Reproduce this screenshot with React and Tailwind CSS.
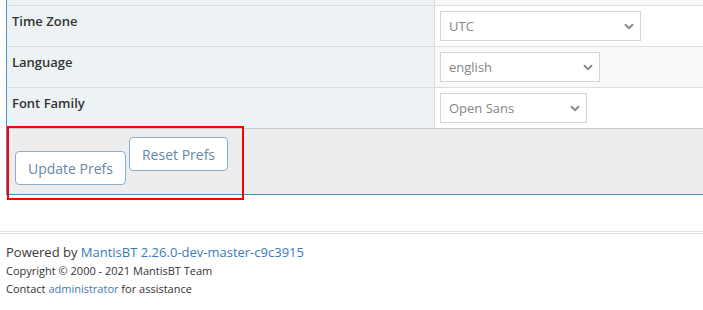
import React from "react";

function Chevron() {
  return (
    <svg width="10" height="7" viewBox="0 0 10 7" className="shrink-0">
      <path d="M1 1.2 L5 5.2 L9 1.2" fill="none" stroke="#888" strokeWidth="2" />
    </svg>
  );
}

function FakeSelect({ value, width }) {
  return (
    <div
      className="flex h-[30px] items-center justify-between border border-[#d5d5d5] bg-white pl-[8px] pr-[6px] pt-[1px] text-[13px] text-[#858585]"
      style={{ width }}
    >
      <span>{value}</span>
      <Chevron />
    </div>
  );
}

function Row({ label, value, width, striped }) {
  return (
    <div className="flex h-[41px] border-t border-[#dddddd]">
      <div className="w-[427px] shrink-0 bg-[#edf3f4] pl-[5px] pt-[5px] text-[13px] font-semibold leading-[20px] text-[#333]">
        {label}
      </div>
      <div
        className={
          "flex-1 border-l border-[#dddddd] pl-[5px] pt-[5px] " +
          (striped ? "bg-[#f9f9f9]" : "bg-white")
        }
      >
        <FakeSelect value={value} width={width} />
      </div>
    </div>
  );
}

export default function App() {
  return (
    <div
      className="relative h-[310px] w-[703px] overflow-hidden bg-white"
      style={{ fontFamily: "'Open Sans', 'Liberation Sans', sans-serif" }}
    >
      <div className="ml-[6px] w-[720px] border-b border-l border-[#5090c1]">
        <div className="flex h-[5px]">
          <div className="w-[427px] shrink-0 bg-[#edf3f4]" />
          <div className="flex-1 border-l border-[#dddddd] bg-[#f9f9f9]" />
        </div>
        <Row label="Time Zone" value="UTC" width={201} />
        <Row label="Language" value="english" width={160} striped />
        <Row label="Font Family" value="Open Sans" width={147} />
        <div className="flex h-[66px] items-start gap-[3px] border-t border-[#cccccc] bg-[#ededed] pl-[8px] pt-[8px]">
          <button className="mt-[14px] h-[34px] w-[111px] rounded-[4px] border border-[#8aafce] bg-white text-[14px] text-[#6688a6]">
            Update Prefs
          </button>
          <button className="h-[34px] w-[99px] rounded-[4px] border border-[#8aafce] bg-white text-[14px] text-[#6688a6]">
            Reset Prefs
          </button>
        </div>
      </div>

      <div className="pointer-events-none absolute left-[7px] top-[126px] h-[74px] w-[237px] border-2 border-[#ff0000]" />

      <div className="mt-[36px] border-t-[3px] border-double border-[#e2e2e2] pl-[6px] pt-[8px]">
        <div className="text-[13px] leading-[20px] text-[#393939]">
          Powered by <span className="text-[#3a7ab7]">MantisBT 2.26.0-dev-master-c9c3915</span>
        </div>
        <div className="text-[11px] leading-[18px] text-[#333]">Copyright © 2000 - 2021 MantisBT Team</div>
        <div className="text-[11px] leading-[18px] text-[#333]">
          Contact <span className="text-[#3a7ab7]">administrator</span> for assistance
        </div>
      </div>
    </div>
  );
}
